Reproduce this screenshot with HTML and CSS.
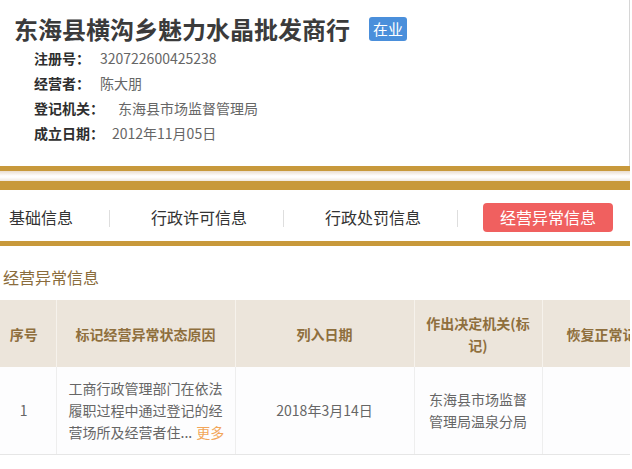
FILE: index.html
```html
<!DOCTYPE html>
<html lang="zh">
<head>
<meta charset="utf-8">
<link rel="stylesheet" href="styles.css">
</head>
<body>
<div class="page">
  <section class="top">
    <div class="title-row">
      <h1 class="title">东海县横沟乡魅力水晶批发商行</h1>
      <span class="badge">在业</span>
    </div>
    <div class="info">
      <div class="row"><span class="lbl">注册号：</span><span class="val v-reg">320722600425238</span></div>
      <div class="row"><span class="lbl">经营者：</span><span class="val v-reg">陈大朋</span></div>
      <div class="row"><span class="lbl">登记机关：</span><span class="val v-org">东海县市场监督管理局</span></div>
      <div class="row"><span class="lbl">成立日期：</span><span class="val v-date">2012年11月05日</span></div>
    </div>
  </section>
  <div class="band-thin"></div>
  <div class="band-gap"></div>
  <div class="band-thick"></div>
  <nav class="tabs">
    <span class="tab">基础信息</span>
    <span class="sep"></span>
    <span class="tab">行政许可信息</span>
    <span class="sep"></span>
    <span class="tab">行政处罚信息</span>
    <span class="sep sep-last"></span>
    <span class="tab tab-active">经营异常信息</span>
  </nav>
  <div class="band-thin"></div>
  <h2 class="sec-title">经营异常信息</h2>
  <div class="table-wrap">
    <table class="grid">
      <colgroup>
        <col class="c1"><col class="c2"><col class="c3"><col class="c4"><col class="c5">
      </colgroup>
      <thead>
        <tr>
          <th>序号</th>
          <th>标记经营异常状态原因</th>
          <th>列入日期</th>
          <th class="narrow">作出决定机关(标记)</th>
          <th>恢复正常记载事项原因</th>
        </tr>
      </thead>
      <tbody>
        <tr>
          <td>1</td>
          <td class="reason">工商行政管理部门在依法履职过程中通过登记的经营场所及经营者住...<span class="more">更多</span></td>
          <td>2018年3月14日</td>
          <td class="narrow">东海县市场监督管理局温泉分局</td>
          <td></td>
        </tr>
      </tbody>
    </table>
  </div>
</div>
</body>
</html>
```
FILE: styles.css
```css
html, body {
  margin: 0;
  padding: 0;
  background: #ffffff;
  overflow: hidden;
}
body {
  font-family: "Noto Sans CJK SC", "Microsoft YaHei", sans-serif;
  color: #333;
}
.page {
  width: 630px;
  overflow: hidden;
}
.top {
  padding: 13px 0 20px 14px;
  border-right: 1px solid #d6d6d6;
  background: #fff;
}
.title-row {
  display: flex;
  align-items: center;
  height: 32px;
}
.title {
  margin: 0;
  font-size: 24px;
  line-height: 32px;
  font-weight: 700;
  color: #3b3b3b;
}
.badge {
  margin-left: 19px;
  width: 38px;
  height: 24px;
  border-radius: 3px;
  background: #4a8fdb;
  color: #fff;
  font-size: 15px;
  line-height: 24px;
  text-align: center;
}
.info {
  padding-left: 20px;
  margin-top: 1px;
}
.row {
  height: 25px;
  line-height: 25px;
  font-size: 14px;
  display: flex;
}
.lbl {
  font-weight: 700;
  color: #2e2e2e;
}
.val {
  color: #666;
}
.v-reg { margin-left: 10px; }
.v-org { margin-left: 14px; }
.v-date { margin-left: 8px; }

.band-thin {
  height: 5px;
  background: #c8993b;
}
.band-gap {
  height: 10px;
  background: linear-gradient(#e9ddd0, #fdfbfa 45%, #ffffff 60%, #efe7df);
}
.band-thick {
  height: 9px;
  background: #c8993b;
}
.tabs {
  height: 51px;
  display: flex;
  align-items: center;
  padding-left: 9px;
  background: #fff;
  font-size: 16px;
  color: #333;
}
.tab {
  white-space: nowrap;
  line-height: 22px;
  padding-top: 2px;
}
.sep {
  width: 1px;
  height: 17px;
  margin: 6px 41px 0 36px;
  background: #dedede;
}
.sep-last {
  margin-right: 25px;
}
.tab-active {
  width: 130px;
  height: 29px;
  line-height: 29px;
  padding-top: 0;
  margin-top: 3px;
  background: #f0605f;
  color: #fff;
  border-radius: 4px;
  text-align: center;
}
.sec-title {
  margin: 0;
  height: 54px;
  box-sizing: border-box;
  padding: 9px 0 0 3px;
  line-height: 44px;
  font-size: 16px;
  font-weight: 400;
  color: #8a6c3c;
  background: #fff;
}
.table-wrap {
  width: 630px;
  overflow: hidden;
}
.grid {
  border-collapse: collapse;
  table-layout: fixed;
  width: 760px;
  font-size: 14px;
}
.c1 { width: 56px; }
.c2 { width: 179px; }
.c3 { width: 179px; }
.c4 { width: 128px; }
.c5 { width: 218px; }
.grid th {
  height: 67px;
  background: #ece5db;
  color: #8f6f3d;
  font-weight: 700;
  line-height: 22px;
  padding: 0 10px;
  text-align: center;
  vertical-align: middle;
  border-left: 1px solid #f6f2ec;
  box-sizing: border-box;
}
.grid th:first-child,
.grid td:first-child {
  border-left: none;
  padding: 0 8px 0 0;
}
.grid th:last-child {
  padding: 0 24px;
  text-align: left;
  white-space: nowrap;
}
.grid td {
  height: 87px;
  background: #fdfdfe;
  color: #666;
  line-height: 22px;
  text-align: center;
  vertical-align: middle;
  padding: 0 10px;
  border-left: 1px solid #eeeeee;
  border-bottom: 1px solid #e6e6e6;
  box-sizing: border-box;
}
.grid td.reason {
  text-align: left;
  padding: 0 6px 0 12px;
}
.more {
  color: #f2a65a;
  margin-left: 4px;
}
```
